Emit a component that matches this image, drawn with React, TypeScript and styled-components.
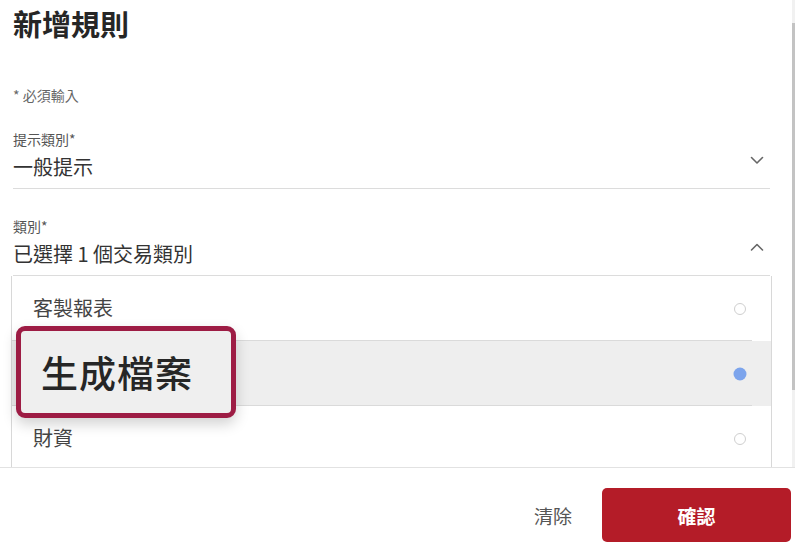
import React from "react";
import styled, { createGlobalStyle } from "styled-components";

const Global = createGlobalStyle`
  html, body { margin: 0; padding: 0; background: #fff; }
  body { font-family: "Noto Sans CJK TC", "Noto Sans", "Liberation Sans", sans-serif; }
  * { box-sizing: border-box; }
`;

const Page = styled.div`
  width: 795px;
  height: 546px;
  display: flex;
  flex-direction: column;
  overflow: hidden;
  background: #fff;
`;

const Body = styled.div`
  height: 467px;
  display: flex;
  flex-direction: row;
`;

const Content = styled.div`
  position: relative;
  flex: 1;
  overflow: hidden;
  padding: 0 22px 0 13px;
`;

const ScrollTrack = styled.div`
  width: 3px;
  background: #f1f1f1;
  padding-top: 23px;
  display: flex;
  flex-direction: column;
`;

const ScrollThumb = styled.div`
  height: 367px;
  background: #c3c3c3;
`;

const Title = styled.h1`
  margin: 0;
  font-size: 29px;
  line-height: 46px;
  font-weight: 700;
  color: #262626;
`;

const Note = styled.div`
  margin-top: 39px;
  font-size: 14px;
  line-height: 20px;
  color: #666;
`;

const Field = styled.div<{ $gap: number }>`
  margin-top: ${(p) => p.$gap}px;
  display: flex;
  align-items: center;
  padding: 0 6px 7px 0;
  border-bottom: 1px solid #dcdcdc;
`;

const FieldText = styled.div`
  flex: 1;
  display: flex;
  flex-direction: column;
  gap: 4px;
`;

const Label = styled.div`
  font-size: 14px;
  line-height: 20px;
  color: #555;
`;

const Value = styled.div`
  font-size: 20px;
  line-height: 28px;
  color: #333;
`;

const Chevron = styled.svg`
  width: 14px;
  height: 14px;
  margin-top: 10px;
`;

const List = styled.div`
  margin: 0 -2px 0 -2px;
  border-left: 1px solid #d8d8d8;
  border-right: 1px solid #d8d8d8;
  display: flex;
  flex-direction: column;
`;

const Option = styled.div<{ $selected?: boolean }>`
  height: 65px;
  display: flex;
  align-items: center;
  padding: 0 25px 0 21px;
  background: ${(p) => (p.$selected ? "#eeeeee" : "#fff")};
  font-size: 20px;
  color: #444;
  position: relative;
  &:not(:last-child)::after {
    content: "";
    position: absolute;
    left: 0;
    right: 19px;
    bottom: 0;
    height: 1px;
    background: #dadada;
  }
`;

const OptionText = styled.span`
  flex: 1;
  margin-top: -2px;
`;

const Radio = styled.span<{ $on?: boolean }>`
  width: 12px;
  height: 12px;
  border-radius: 50%;
  border: ${(p) => (p.$on ? "none" : "1px solid #cfcfcf")};
  background: ${(p) => (p.$on ? "#7ca4ec" : "#fff")};
  transform: ${(p) => (p.$on ? "scale(1.08)" : "none")};
`;

const Callout = styled.div`
  position: absolute;
  left: 16px;
  top: 326px;
  width: 220px;
  height: 92px;
  border: 5px solid #9d1c44;
  border-radius: 9px;
  background: #efefef;
  box-shadow: 0 6px 14px rgba(0, 0, 0, 0.18);
  display: flex;
  align-items: center;
  padding-left: 20px;
  font-size: 37px;
  font-weight: 500;
  color: #262626;
  letter-spacing: 1px;
`;

const Footer = styled.div`
  height: 79px;
  border-top: 1px solid #e2e2e2;
  display: flex;
  justify-content: flex-end;
  align-items: flex-start;
  padding: 20px 4px 0 0;
  gap: 30px;
`;

const ClearButton = styled.button`
  height: 54px;
  border: none;
  background: transparent;
  font-family: inherit;
  font-size: 19px;
  color: #555;
  padding: 0;
`;

const ConfirmButton = styled.button`
  width: 189px;
  height: 54px;
  border: none;
  border-radius: 5px;
  background: #b41c28;
  color: #fff;
  font-family: inherit;
  font-size: 19px;
  font-weight: 700;
`;

const ChevronIcon = ({ up }: { up?: boolean }) => (
  <Chevron viewBox="0 0 14 14" fill="none">
    <path
      d={up ? "M1.5 10 L7 4.5 L12.5 10" : "M1.5 4.5 L7 10 L12.5 4.5"}
      stroke="#666"
      strokeWidth="1.6"
      strokeLinecap="round"
      strokeLinejoin="round"
    />
  </Chevron>
);

const options = [
  { label: "客製報表", on: false },
  { label: "生成檔案", on: true },
  { label: "財資", on: false },
];

export default function App() {
  return (
    <>
      <Global />
      <Page>
        <Body>
          <Content>
            <Title>新增規則</Title>
            <Note>* 必須輸入</Note>
            <Field $gap={24}>
              <FieldText>
                <Label>提示類別*</Label>
                <Value>一般提示</Value>
              </FieldText>
              <ChevronIcon />
            </Field>
            <Field $gap={27}>
              <FieldText>
                <Label>類別*</Label>
                <Value>已選擇 1 個交易類別</Value>
              </FieldText>
              <ChevronIcon up />
            </Field>
            <List>
              {options.map((o) => (
                <Option key={o.label} $selected={o.on}>
                  <OptionText>{o.label}</OptionText>
                  <Radio $on={o.on} />
                </Option>
              ))}
            </List>
            <Callout>生成檔案</Callout>
          </Content>
          <ScrollTrack>
            <ScrollThumb />
          </ScrollTrack>
        </Body>
        <Footer>
          <ClearButton>清除</ClearButton>
          <ConfirmButton>確認</ConfirmButton>
        </Footer>
      </Page>
    </>
  );
}
